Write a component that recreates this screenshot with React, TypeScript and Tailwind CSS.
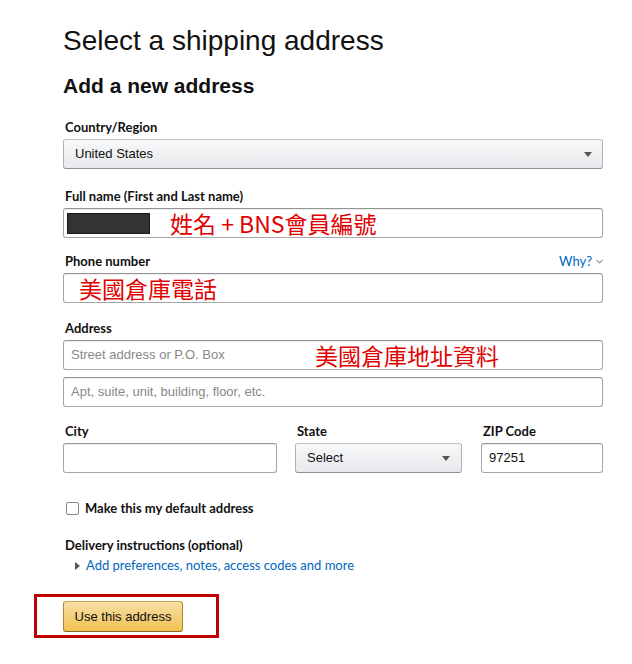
import React from "react";

const labelCls =
  "block pl-[2px] mb-[2px] text-[13px] leading-[19px] font-bold text-[#111]";
const inputCls =
  "h-[30px] w-full rounded-[3px] border border-[#a6a6a6] border-t-[#949494] bg-white shadow-[inset_0_1px_0_rgba(0,0,0,0.07)] flex items-center";
const selectCls =
  "h-[30px] w-full rounded-[3px] border border-[#adb1b8] border-t-[#c2c5ca] border-b-[#8d9096] bg-gradient-to-b from-[#f7f8fa] to-[#e7e9ec] flex items-center justify-between";
const redText =
  "text-[#e00000] text-[23px] leading-none whitespace-nowrap";

const cjk = { fontFamily: '"Noto Sans CJK TC", "Noto Sans", sans-serif' };
const arial = { fontFamily: '"Liberation Sans", Arial, sans-serif' };

function Arrow() {
  return (
    <svg width="8" height="5" viewBox="0 0 8 5" className="shrink-0">
      <path d="M0 0 L8 0 L4 5 Z" fill="#555" />
    </svg>
  );
}

export default function App() {
  return (
    <div
      className="w-[632px] h-[664px] bg-white overflow-hidden"
      style={{ fontFamily: 'Lato, "Open Sans", sans-serif' }}
    >
      <div className="pl-[63px] w-[603px] pt-[23px]">
        <h1
          className="text-[28px] leading-[36px] font-normal text-[#111]"
          style={arial}
        >
          Select a shipping address
        </h1>
        <h2
          className="mt-[13px] text-[21px] leading-[28px] font-bold text-[#111]"
          style={arial}
        >
          Add a new address
        </h2>

        <div className="mt-[18px]">
          <label className={labelCls}>Country/Region</label>
          <div className={selectCls + " pl-[11px] pr-[10px]"}>
            <span className="text-[13px] text-[#111]" style={arial}>
              United States
            </span>
            <Arrow />
          </div>
        </div>

        <div className="mt-[18px]">
          <label className={labelCls}>Full name (First and Last name)</label>
          <div className={inputCls + " pl-[3px]"}>
            <div className="w-[83px] h-[21px] bg-[#333] border border-[#1a1a1a]" />
            <span className={redText + " ml-[20px]"} style={cjk}>
              姓名 + BNS會員編號
            </span>
          </div>
        </div>

        <div className="mt-[14px]">
          <div className="flex items-center justify-between">
            <label className={labelCls}>Phone number</label>
            <span className="mb-[2px] flex items-center gap-[4px] text-[13px] leading-[19px] text-[#0066c0]">
              Why?
              <svg width="7" height="5" viewBox="0 0 7 5">
                <path
                  d="M0.5 0.8 L3.5 3.8 L6.5 0.8"
                  fill="none"
                  stroke="#999"
                  strokeWidth="1.2"
                />
              </svg>
            </span>
          </div>
          <div className={inputCls + " pl-[15px]"}>
            <span className={redText} style={cjk}>
              美國倉庫電話
            </span>
          </div>
        </div>

        <div className="mt-[16px]">
          <label className={labelCls}>Address</label>
          <div className={inputCls + " pl-[7px]"}>
            <span className="text-[13px] text-[#888] w-[244px]" style={arial}>
              Street address or P.O. Box
            </span>
            <span className={redText} style={cjk}>
              美國倉庫地址資料
            </span>
          </div>
          <div className={inputCls + " pl-[7px] mt-[7px]"}>
            <span className="text-[13px] text-[#888]" style={arial}>
              Apt, suite, unit, building, floor, etc.
            </span>
          </div>
        </div>

        <div className="mt-[15px] flex">
          <div className="w-[214px]">
            <label className={labelCls}>City</label>
            <div className={inputCls} />
          </div>
          <div className="w-[167px] ml-[18px]">
            <label className={labelCls}>State</label>
            <div className={selectCls + " pl-[11px] pr-[11px]"}>
              <span className="text-[13px] text-[#111]" style={arial}>
                Select
              </span>
              <Arrow />
            </div>
          </div>
          <div className="flex-1 ml-[19px]">
            <label className={labelCls}>ZIP Code</label>
            <div className={inputCls + " pl-[7px]"}>
              <span className="text-[13px] text-[#111]" style={arial}>
                97251
              </span>
            </div>
          </div>
        </div>

        <div className="mt-[26px] flex items-center pl-[3px]">
          <div className="w-[13px] h-[13px] rounded-[2px] border border-[#888] bg-white" />
          <span className="ml-[6px] text-[13px] leading-[19px] font-bold text-[#111]">
            Make this my default address
          </span>
        </div>

        <div className="mt-[18px] pl-[2px] text-[13px] leading-[19px] font-bold text-[#111]">
          Delivery instructions (optional)
        </div>
        <div className="mt-[1px] flex items-center pl-[12px]">
          <svg width="5" height="8" viewBox="0 0 5 8" className="mr-[6px]">
            <path d="M0 0 L5 4 L0 8 Z" fill="#555" />
          </svg>
          <span className="text-[13px] leading-[19px] text-[#0066c0]">
            Add preferences, notes, access codes and more
          </span>
        </div>

        <div className="relative mt-[26px] w-[120px]">
          <div className="absolute left-[-29px] top-[-7px] w-[185px] h-[44px] border-[3px] border-[#c00000]" />
          <div
            className="h-[31px] w-[120px] rounded-[3px] border border-[#a88734] border-t-[#c4a54b] border-b-[#846a29] bg-gradient-to-b from-[#f7dfa5] to-[#f0c14b] flex items-center justify-center text-[13px] text-[#111]"
            style={arial}
          >
            Use this address
          </div>
        </div>
      </div>
    </div>
  );
}
